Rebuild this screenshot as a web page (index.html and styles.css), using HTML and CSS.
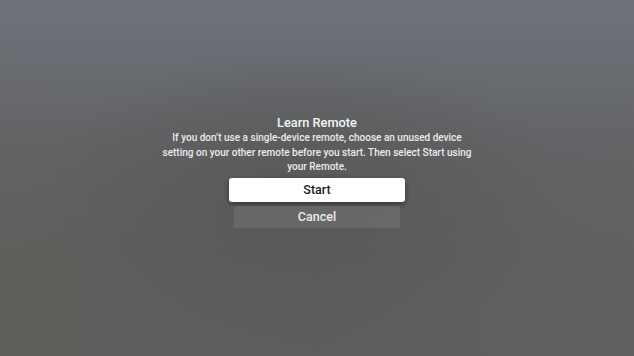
FILE: index.html
```html
<!DOCTYPE html>
<html>
<head>
<meta charset="utf-8">
<link rel="stylesheet" href="styles.css">
</head>
<body>
<main class="screen">
  <section class="dialog">
    <h1 class="title">Learn Remote</h1>
    <p class="message">If you don’t use a single-device remote, choose an unused device setting on your other remote before you start. Then select Start using your Remote.</p>
    <div class="actions">
      <button class="btn btn-primary">Start</button>
      <button class="btn btn-secondary">Cancel</button>
    </div>
  </section>
</main>
</body>
</html>
```
FILE: styles.css
```css
html, body {
  margin: 0;
  padding: 0;
  width: 634px;
  height: 356px;
  overflow: hidden;
}
body {
  font-family: Roboto, "Liberation Sans", sans-serif;
  background: #5f5f5f;
}
.screen {
  width: 634px;
  height: 356px;
  box-sizing: border-box;
  padding-top: 114px;
  display: flex;
  justify-content: center;
  background:
    radial-gradient(ellipse 260px 150px at 300px 200px, rgba(88,88,88,0.9), rgba(88,88,88,0) 100%),
    linear-gradient(to bottom, rgba(110,115,123,1) 0%, rgba(100,102,106,0.6) 40%, rgba(96,94,90,0) 70%),
    linear-gradient(to right, #615f5c 0%, #5d5d5d 50%, #616161 100%);
}
.dialog {
  width: 320px;
  display: flex;
  flex-direction: column;
  align-items: center;
  color: #f2f2f2;
}
.title {
  margin: 0;
  font-size: 12.8px;
  font-weight: 500;
  line-height: 17px;
  color: #f4f4f4;
}
.message {
  margin: 0;
  font-size: 10px;
  line-height: 14.5px;
  text-align: center;
  font-weight: 500;
  color: #ececec;
}
.actions {
  margin-top: 3px;
  display: flex;
  flex-direction: column;
  align-items: center;
  gap: 4px;
}
.btn {
  font-family: inherit;
  border: none;
  font-size: 12.5px;
  font-weight: 500;
  padding: 0;
}
.btn-primary {
  width: 176px;
  height: 24px;
  background: #ffffff;
  color: #1a1a1a;
  border-radius: 3px;
  box-shadow: 0 2px 5px rgba(0,0,0,0.45);
}
.btn-secondary {
  width: 166px;
  height: 22px;
  background: rgba(120,120,120,0.45);
  color: #ececec;
  border-radius: 2px;
}
```
